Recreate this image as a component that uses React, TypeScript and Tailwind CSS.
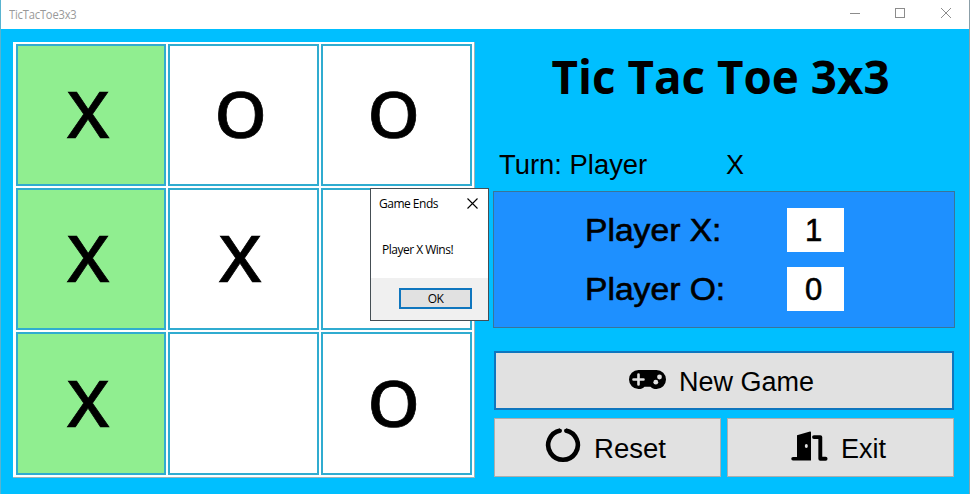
const board: { mark: string; won: boolean }[] = [
  { mark: "X", won: true },
  { mark: "O", won: false },
  { mark: "O", won: false },
  { mark: "X", won: true },
  { mark: "X", won: false },
  { mark: "", won: false },
  { mark: "X", won: true },
  { mark: "", won: false },
  { mark: "O", won: false },
];

const sans = "font-['Liberation_Sans',Arial,sans-serif]";

function Cell({ mark, won }: { mark: string; won: boolean }) {
  return (
    <div
      className={`flex items-center justify-center overflow-hidden border-2 border-[#30acd0] pr-[6px] pb-[3px] ${won ? "bg-[#90ee90]" : "bg-white"}`}
    >
      <span
        className={`font-['Noto_Sans',sans-serif] text-[63px] leading-none font-medium text-black [-webkit-text-stroke:0.7px_black] ${mark === "X" ? "scale-x-[1.1]" : "scale-x-[1.06]"}`}
      >
        {mark}
      </span>
    </div>
  );
}

function TitleBar() {
  return (
    <header className="flex h-[29px] shrink-0 items-center justify-between bg-white pr-[18px] pl-2">
      <span className="origin-left scale-x-[0.93] font-['Open_Sans',sans-serif] text-[12px] leading-none tracking-[-0.2px] text-[#999999]">
        TicTacToe3x3
      </span>
      <div className="flex items-center pb-[3px] text-[#8c8c8c]">
        <svg className="mr-[35px]" width="10" height="10" viewBox="0 0 10 10" stroke="currentColor">
          <path d="M0 5.5h10" />
        </svg>
        <svg className="mr-[36px]" width="10" height="10" viewBox="0 0 10 10" fill="none" stroke="currentColor">
          <rect x="0.5" y="0.5" width="9" height="9" />
        </svg>
        <svg width="10" height="10" viewBox="0 0 10 10" stroke="currentColor">
          <path d="M0 0l10 10M10 0L0 10" />
        </svg>
      </div>
    </header>
  );
}

function GamepadIcon() {
  return (
    <svg className="mb-[2px]" width="37" height="19" viewBox="0 0 37 19">
      <path
        d="M9.5 0h18A9.3 9.3 0 0 1 27.5 19c-2.7 0-4.6-.9-6-2.3h-6c-1.400 1.400-3.300 2.300-6 2.300A9.300 9.300 0 0 1 9.500 0Z"
        fill="#000"
      />
      <path d="M9.500 4.500v10M4.500 9.500h10" stroke="#e1e1e1" strokeWidth="2.6" strokeLinecap="round" />
      <circle cx="26.800" cy="12.200" r="2.400" fill="#e1e1e1" />
      <circle cx="30.500" cy="7" r="2.400" fill="#e1e1e1" />
    </svg>
  );
}

function ResetIcon() {
  return (
    <svg className="mb-[5px]" width="36" height="36" viewBox="0 0 36 36" fill="none">
      <path
        d="M15.300 3.400A14.800 14.800 0 1 0 20.700 3.400"
        stroke="#000"
        strokeWidth="4.600"
      />
      <circle cx="15" cy="3.700" r="2" fill="#000" />
      <circle cx="21" cy="3.700" r="2" fill="#000" />
    </svg>
  );
}

function DoorIcon() {
  return (
    <svg className="mb-[3px]" width="37" height="30" viewBox="0 0 37 30" fill="none">
      <path d="M6 4.200 19 .6q1-.2 1 .8V29.500H2a1.750 1.750 0 0 1 0-3.500h4Z" fill="#000" />
      <path d="M23 6.100h6.300v21.600h5.300" stroke="#000" strokeWidth="3.900" strokeLinecap="round" strokeLinejoin="round" />
      <ellipse cx="15.300" cy="15" rx="1.500" ry="2" fill="#e1e1e1" />
    </svg>
  );
}

function ScoreRow({ label, value }: { label: string; value: string }) {
  return (
    <div className="flex h-11 items-center text-[31px] leading-none text-black [-webkit-text-stroke:0.6px_black]">
      <span className="w-[202px] origin-left scale-x-[1.085] whitespace-nowrap">{label}</span>
      <span className="flex h-11 w-[57px] items-center justify-center bg-white pr-1">{value}</span>
    </div>
  );
}

function Dialog() {
  return (
    <div className="absolute top-[188px] left-[369px] flex h-[133px] w-[119px] flex-col border border-[#454e54] bg-white font-['Open_Sans',sans-serif] text-black">
      <div className="flex h-[29px] items-center justify-between pr-[10px] pl-2">
        <span className="text-[12px] leading-none tracking-[-0.5px]">Game Ends</span>
        <svg width="11" height="11" viewBox="0 0 11 11" stroke="#000" strokeWidth="1.1">
          <path d="M.5.5l10 10M10.500.5l-10 10" />
        </svg>
      </div>
      <p className="flex-1 pt-[26px] pl-[11px] text-[12px] leading-none tracking-[-0.5px]">
        Player X Wins!
      </p>
      <div className="flex h-[42px] justify-end bg-[#f0f0f0] pt-[10px] pr-4">
        <button className="flex h-[21px] w-[73px] items-center justify-center border-2 border-[#0f76be] bg-[#e1e1e1] text-[12px] leading-none tracking-[-0.6px]">
          OK
        </button>
      </div>
    </div>
  );
}

export default function App() {
  return (
    <div className={`relative flex h-[494px] w-[970px] flex-col overflow-hidden border-r border-l border-r-[#8b9fa8] border-l-[#58b4d0] bg-[#00bfff] ${sans}`}>
      <TitleBar />
      <main className="flex flex-1 pt-[13px] pl-3">
        <section className="grid h-[436px] w-[462px] grid-cols-[150px_151px_151px] grid-rows-[142px_142px_143px] gap-[2px] border-r border-b border-[#a0b4b8] bg-white pt-[2px] pl-[3px]">
          {board.map((cell, i) => (
            <Cell key={i} mark={cell.mark} won={cell.won} />
          ))}
        </section>

        <section className="ml-[18px] w-[462px]">
          <h1 className="h-[104px] origin-left translate-x-[2px] scale-x-[0.974] pt-[8px] pl-[58px] font-['Open_Sans',sans-serif] text-[47px] leading-[53px] font-bold whitespace-nowrap text-black">
            Tic Tac Toe 3x3
          </h1>
          <div className="flex h-[45px] items-center pb-[7px] pl-[6px] text-[27px] leading-none text-black">
            <span className="w-[227px] origin-left scale-x-[1.015]">Turn: Player</span>
            <span>X</span>
          </div>
          <div className="flex h-[137px] flex-col gap-[15px] border border-[#3a7598] bg-[#1e90ff] pt-4 pl-[91px]">
            <ScoreRow label="Player X:" value="1" />
            <ScoreRow label="Player O:" value="0" />
          </div>
          <button className="mt-[23px] ml-px flex h-[59px] w-[460px] items-center border-2 border-[#0f76be] bg-[#e1e1e1] pl-[133px] text-[27px] leading-none text-black">
            <GamepadIcon />
            <span className="ml-[13px] pt-1">New Game</span>
          </button>
          <div className="mt-2 ml-px flex gap-[6px] text-[27px] leading-none text-black">
            <button className="flex h-[59px] w-[227px] items-center border border-[#adadad] bg-[#e1e1e1] pl-[50px]">
              <ResetIcon />
              <span className="ml-[13px] origin-left scale-x-[1.02] pt-1">Reset</span>
            </button>
            <button className="flex h-[59px] w-[227px] items-center border border-[#adadad] bg-[#e1e1e1] pl-[63px]">
              <DoorIcon />
              <span className="ml-[13px] pt-1">Exit</span>
            </button>
          </div>
        </section>
      </main>
      <Dialog />
    </div>
  );
}
